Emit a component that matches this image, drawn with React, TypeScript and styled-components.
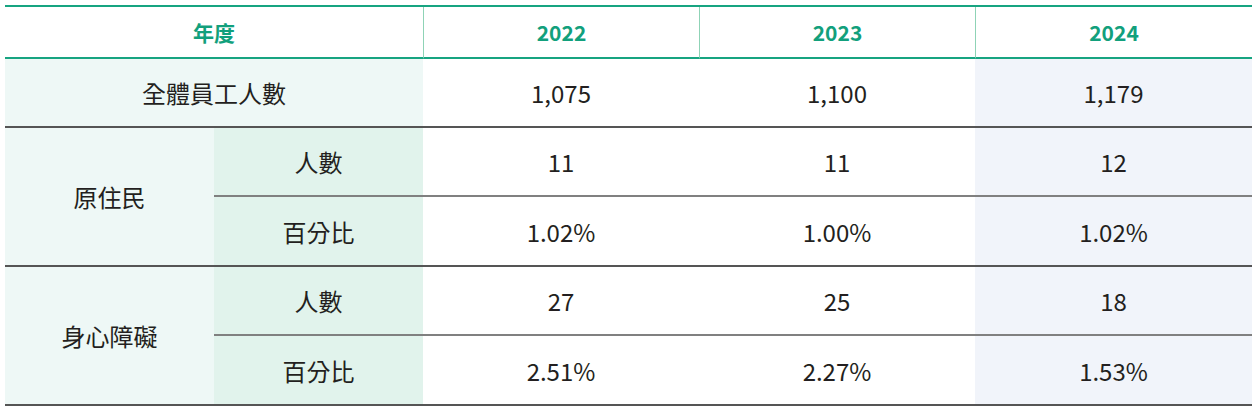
import React from 'react'
import styled, { createGlobalStyle } from 'styled-components'

const GlobalStyle = createGlobalStyle`
    body {
        margin: 0;
        background: #ffffff;
        font-family: "Noto Sans CJK TC", "Noto Sans", sans-serif;
    }
`

type Row = {
    label: string
    values: string[]
}

type Group = {
    title: string
    rows: Row[]
}

const years = ['2022', '2023', '2024']

const total: Row = { label: '全體員工人數', values: ['1,075', '1,100', '1,179'] }

const groups: Group[] = [
    {
        title: '原住民',
        rows: [
            { label: '人數', values: ['11', '11', '12'] },
            { label: '百分比', values: ['1.02%', '1.00%', '1.02%'] },
        ],
    },
    {
        title: '身心障礙',
        rows: [
            { label: '人數', values: ['27', '25', '18'] },
            { label: '百分比', values: ['2.51%', '2.27%', '1.53%'] },
        ],
    },
]

const App = () => {
    return (
        <>
            <GlobalStyle />
            <Wrapper>
                <Table>
                    <HeadCell $span={2}>年度</HeadCell>
                    {years.map((y) => (
                        <HeadCell key={y} $divider>{y}</HeadCell>
                    ))}

                    <Cell $span={2} $bg="#eef8f6" $line="major">{total.label}</Cell>
                    {total.values.map((v, i) => (
                        <Cell key={i} $bg={i === 2 ? '#f1f4fa' : '#ffffff'} $line="major">{v}</Cell>
                    ))}

                    {groups.map((g) => (
                        <React.Fragment key={g.title}>
                            <Cell $rowSpan={g.rows.length} $bg="#eef8f6" $line="major">{g.title}</Cell>
                            {g.rows.map((r, ri) => {
                                const line = ri === g.rows.length - 1 ? 'major' : 'minor'
                                return (
                                    <React.Fragment key={r.label}>
                                        <Cell $bg="#e1f3ec" $line={line}>{r.label}</Cell>
                                        {r.values.map((v, i) => (
                                            <Cell key={i} $bg={i === 2 ? '#f1f4fa' : '#ffffff'} $line={line}>{v}</Cell>
                                        ))}
                                    </React.Fragment>
                                )
                            })}
                        </React.Fragment>
                    ))}
                </Table>
            </Wrapper>
        </>
    )
}

const Wrapper = styled.div`
    padding: 5px 5px 0 5px;
`

const Table = styled.div`
    display: grid;
    grid-template-columns: 209px 209px 276px 276px 277px;
    grid-template-rows: 52px 69px 69px 70px 69px 70px;
    width: 1247px;
    border-top: 2px solid #17a481;
`

const HeadCell = styled.div<{ $span?: number; $divider?: boolean }>`
    grid-column: span ${(p) => p.$span || 1};
    box-sizing: border-box;
    display: flex;
    align-items: center;
    justify-content: center;
    background: #ffffff;
    border-bottom: 2px solid #17a481;
    border-left: ${(p) => (p.$divider ? '1px solid #8fd3b6' : 'none')};
    color: #12a07c;
    font-size: 21px;
    font-weight: 700;
`

const Cell = styled.div<{ $span?: number; $rowSpan?: number; $bg: string; $line: 'major' | 'minor' }>`
    grid-column: span ${(p) => p.$span || 1};
    grid-row: span ${(p) => p.$rowSpan || 1};
    box-sizing: border-box;
    display: flex;
    align-items: center;
    justify-content: center;
    background: ${(p) => p.$bg};
    border-bottom: 2px solid ${(p) => (p.$line === 'major' ? '#555555' : '#808080')};
    color: #231f20;
    font-size: 24px;
    font-weight: 400;
`

export default App
